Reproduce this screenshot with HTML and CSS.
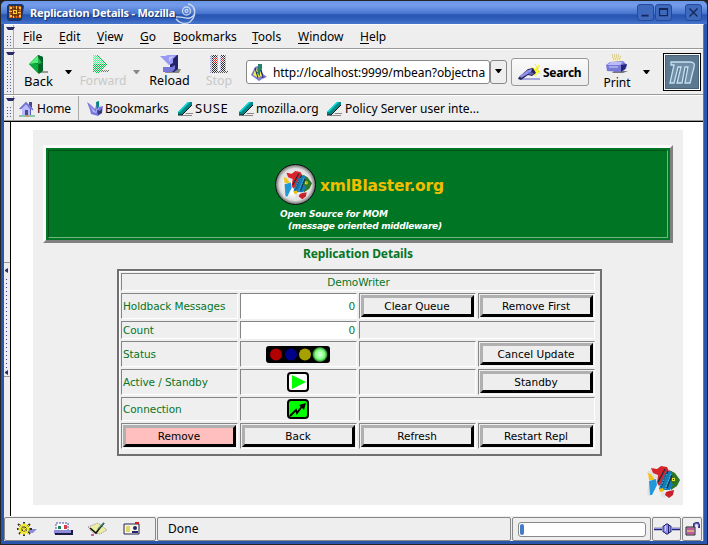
FILE: index.html
```html
<!DOCTYPE html>
<html lang="en">
<head>
<meta charset="utf-8">
<title>Replication Details - Mozilla</title>
<link rel="stylesheet" href="styles.css">
</head>
<body>
<svg class="defs" width="0" height="0">
  <defs>
    <symbol id="tag" viewBox="0 0 17 16">
      <path d="M5 14h10v1H4zM9 12h7v1H8z" fill="#888"/>
      <path d="M1 11 11 1h4v3L5 14H1z" fill="#008888"/>
      <path d="M1 11 11 1h2L3 11z" fill="#00dede"/>
      <path d="M1 14h4L15 4" fill="none" stroke="#111"/>
    </symbol>
    <symbol id="fish" viewBox="0 0 34 34">
      <path d="M5 3 12 7 10 14 3 9 0 7zM3 14 9 16 9 24 3 31 1 28zM15 24l4 2 0 6 4 2-8-4z" fill="#e2e2e2"/>
      <path d="M2 7 5 8 9 14 3 14z" fill="#efc41c"/>
      <path d="M3 15 10 13 11 19 6 29 4 29z" fill="#2297d9"/>
      <path d="M5 2 11 3 15 0 21 1 23 5 18 15 13 20 11 17 12 9 7 7z" fill="#d7252b"/>
      <path d="M23 4 29 7 34 14 31 20 25 24 24 14z" fill="#2e7825"/>
      <path d="M20 6 26 5 26 10 24 14 27 19 24 24 19 24 13 23 15 16z" fill="#147db8"/>
      <path d="m19 3-7 13m10-11-7 16m11-12-5 13" fill="none" stroke="#182c45" stroke-width="1.300"/>
      <path d="m21 8-6 12m10-12-6 15" stroke="#45c4ea" stroke-dasharray="2 1"/>
      <path d="m13 23 4-1 1 3-4 1z" fill="#efbd00"/>
      <path d="m20 26 3-1 5-1-1 5-4 3-4-3z" fill="#c9202b"/>
      <path d="M26 12h3v3h-3z" fill="#f5ea22"/><path d="M27 13h1v1h-1z"/>
    </symbol>
  </defs>
</svg>
<div class="window">
  <header class="titlebar">
    <svg class="appicon" width="17" height="17" viewBox="0 0 17 17"><path d="M0 2 2 0h13l2 2-2 13-2 2H2l-2-2z" fill="#18366b"/><path d="M2 2h12v12H2z" fill="#e0650c"/><path d="M3 5h10M2 8h12M3 11h10M5 2v12M8 1v13M11 2v12" stroke="#25140a" stroke-width=".8"/><path d="M6 6h4v4H6z" fill="#ffd42a"/><path d="M7 7h2v2H7z" fill="#a43c05"/><path d="M3 3h2v2H3zm6-1h1v3H9zm3 1h2v2h-2zM3 11h2v2H3zm3 1h1v2H6zm6-1h2v2h-2zM2 7h3v1H2zm9 1h3v1h-3z" fill="#ffc33a"/></svg>
    <span class="title">Replication Details - Mozilla</span>
    <svg class="curl" width="22" height="22" viewBox="0 0 22 22" fill="none" stroke="#c9d6ef" stroke-width="1.300"><path d="M1 14c8-1 12 4 17-1 4-5 1-11-5-12M1 16c3 4 9 6 14 3 5-4 6-10 3-15"/><circle cx="11.500" cy="8" r="4"/><circle cx="11.500" cy="8" r="1.500"/></svg>
    <div class="winbtns">
      <svg class="wb" viewBox="0 0 17 17"><path d="M4 11h8v2H4z" fill="#14265a"/></svg>
      <svg class="wb" viewBox="0 0 17 17"><path d="M4 4h9v8H4zM4 5h9" fill="none" stroke="#14265a" stroke-width="1.300"/></svg>
      <svg class="wb close" viewBox="0 0 17 17"><path d="m4 4 9 9m0-9-9 9" stroke="#14265a" stroke-width="1.500"/></svg>
    </div>
  </header>

  <div class="chrome">
    <nav class="bar menubar">
      <i class="grip"></i>
      <span class="m-file"><u>F</u>ile</span><span class="m-edit"><u>E</u>dit</span><span class="m-view"><u>V</u>iew</span><span class="m-go"><u>G</u>o</span><span class="m-book"><u>B</u>ookmarks</span><span class="m-tools"><u>T</u>ools</span><span class="m-win"><u>W</u>indow</span><span><u>H</u>elp</span>
    </nav>

    <div class="bar toolbar">
      <i class="grip"></i>
      <div class="tool t-back">
        <svg width="20" height="20" viewBox="0 0 20 20"><path d="M7 17h12v2H9z" fill="#999"/><path d="M0 10 9 1l5 2v14l-4 3z" fill="#087a2a"/><path d="M0 10 9 1v8z" fill="#51ef75"/><path d="M0 10h9v9z" fill="#0aae3e"/><path d="M9 1 14 3v13l-4 3z" fill="#056329"/><path d="m9 3 4 6-4 1z" fill="#1fb44d"/></svg>
        <span>Back</span>
      </div>
      <i class="drop d-back"></i>
      <div class="tool t-fwd">
        <svg width="20" height="20" viewBox="0 0 20 20" shape-rendering="crispEdges"><defs><pattern id="dither" width="2" height="2" patternUnits="userSpaceOnUse"><path d="M0 0h1v1H0zm1 1h1v1H1z" fill="#eee"/></pattern></defs><path d="M9 16h10l-3 2H8z" fill="#777"/><path d="M2 1h4l10 9-9 9-5-1z" fill="#00c444"/><path d="M2 1h4l8 9H2z" fill="#4aff90"/><path d="M0 0h20v20H0z" fill="url(#dither)"/></svg>
        <span>Forward</span>
      </div>
      <i class="drop d-fwd"></i>
      <div class="tool t-reload">
        <svg width="22" height="20" viewBox="0 0 22 20"><path d="M13 15h8l-2 4H5l1-3z" fill="#888"/><path d="M8 1h10v14l-4 3H3v-5h7V8H6z" fill="#23236b"/><path d="M0 2h5l3-1h9l-4 4v4l-4 2z" fill="#9999f4"/><path d="M3 13h9l3-2v4l-3 3H3z" fill="#7777d7"/><path d="m9 3 5-1-3 3-2 3z" fill="#c7c7ff"/></svg>
        <span>Reload</span>
      </div>
      <div class="tool t-stop">
        <svg width="20" height="20" viewBox="0 0 20 20" shape-rendering="crispEdges"><path d="M1 1h8v18H1zM11 1h6v18h-6z" fill="#8c8ce4"/><path d="M3 1h5v18H3zM12 1h4v18h-4z" fill="#26262f"/><path d="M4 3h4v6H4zM12 3h3v5h-3z" fill="#e92020"/><path d="M8 17h11v2H6z" fill="#555"/><path d="M0 0h20v20H0z" fill="url(#dither)"/></svg>
        <span>Stop</span>
      </div>
      <div class="url">
        <svg width="16" height="17" viewBox="0 0 16 17"><path d="m0 11 4-8 3-1 3 2 2 6 4 3-5 2-3 2z" fill="#7979cb"/><path d="m2 11 3-7 4 9-2 1zm7-4 3 6-3-1z" fill="#eaea55"/><path d="M7 0h4v5l-2 3v4L5 8h2z" fill="#258467"/><path d="m4 4 3 10m3-8 2 8" stroke="#20205b"/></svg>
        <span>http://localhost:9999/mbean?objectna</span>
      </div>
      <div class="urldrop"><i class="drop"></i></div>
      <div class="search">
        <svg width="23" height="18" viewBox="0 0 23 18"><path d="M4 14h18v2H3z" fill="#a6a6da"/><path d="m13 2 4 3 4-5-1 6 3 2-4 1-1 4-4-5z" fill="#ffff25"/><path d="m17 0 5 10m0-8-7 8" stroke="#e8cf30" stroke-dasharray="1 1"/><path d="m1 13 9-8 5-1 3 5-4 3-4-1-7 5-3-1z" fill="#25255d"/><path d="m2 12 8-6 4-1-1 3-10 6z" fill="#9292ef"/><path d="m11 8 5 1-2 2-4-1z" fill="#6565b9"/></svg>
        <span>Search</span>
      </div>
      <div class="tool t-print">
        <svg width="23" height="20" viewBox="0 0 23 20"><path d="M8 17h14l-5 2H6z" fill="#777"/><path d="m5 0 9 1 2 8H7z" fill="#f8edbf"/><path d="M6 1h8M6 3h9M7 5h8" stroke="#c1b376" stroke-dasharray="1 1"/><path d="m0 11 4-3 13-1 4 4-1 4-5 3-14-1z" fill="#7878d5"/><path d="m1 11 4-3h12l-3 3z" fill="#babaff"/><path d="m15 11 6-1-2 5-4 3z" fill="#25257b"/><path d="M3 13h9" stroke="#d4d4ff"/></svg>
        <span>Print</span>
      </div>
      <i class="drop d-print"></i>
      <div class="throbber"><svg width="32" height="32" viewBox="0 0 32 32"><path d="M5 6h19c4 0 5 2 4 5l-4 16h-5l3-16h-3l-3 16h-5l4-16h-3L8 27H4L8 9H5z" fill="#718da7" stroke="#c3e1ef" stroke-width="1.300"/></svg></div>
    </div>

    <div class="bar bookmarks">
      <i class="grip"></i>
      <svg class="b-homeicon" width="16" height="16" viewBox="0 0 16 16"><path d="M0 8 7 1l7 7h-2v6H3V8z" fill="#5a5abc"/><path d="m2 8 5-5 4 5v6H3V8z" fill="#b8b8ff"/><path d="M10 1h3v6l-3-3zM6 9h3v5H6z" fill="#494990"/><path d="m1 8 6-6 7 7" fill="none" stroke="#7878d8" stroke-width="1.500"/><path d="M0 15h16" stroke="#2a9d70"/><path d="M6 15h4" stroke="#eb7831"/></svg>
      <span class="b-home">Home</span>
      <svg class="b-bookicon" width="17" height="17" viewBox="0 0 17 17"><path d="m0 2 4 3 4 4 2-7 2 5 4-1-1 7-4 3-7-2-1-4z" fill="#7777df"/><path d="m2 3 3 5 4 4 1-6 2 2-3 5-3-1z" fill="#b8b8ff"/><path d="m9 2 3-1v5l-2 4z" fill="#00857d"/><path d="m10 10 3 1 2-3v5l-4 2z" fill="#38387d"/></svg>
      <span class="b-book">Bookmarks</span>
      <svg class="tagicon"><use href="#tag"/></svg><span class="b-suse">SUSE</span>
      <svg class="tagicon"><use href="#tag"/></svg><span class="b-moz">mozilla.org</span>
      <svg class="tagicon"><use href="#tag"/></svg><span class="b-policy">Policy Server user inte...</span>
    </div>

    <div class="work">
      <aside class="splitter"><div class="handle"><i></i><b></b><i></i></div></aside>
      <main class="page">
        <section class="panel">
          <div class="banner"><div class="banner-in">
            <svg width="172" height="70" viewBox="0 0 172 70">
              <defs><radialGradient id="orb"><stop offset=".45" stop-color="#fff"/><stop offset=".8" stop-color="#ddd"/><stop offset="1" stop-color="#666"/></radialGradient></defs>
              <circle cx="20.500" cy="20.500" r="20" fill="url(#orb)" stroke="#111"/>
              <use href="#fish" x="6" y="7" width="32" height="30"/>
              <text class="brand" x="45" y="27" textLength="124">xmlBlaster.org</text>
              <text class="motto" x="5" y="53" textLength="108">Open Source for MOM</text>
              <text class="motto" x="13" y="65" textLength="154">(message oriented middleware)</text>
            </svg>
          </div></div>
          <h1>Replication Details</h1>
          <div class="grid">
            <div class="cell full">DemoWriter</div>
            <div class="cell">Holdback Messages</div><div class="cell num">0</div><div class="cell act"><button>Clear Queue</button></div><div class="cell act"><button>Remove First</button></div>
            <div class="cell">Count</div><div class="cell num">0</div><div class="cell two"></div>
            <div class="cell">Status</div>
            <div class="cell icon"><svg width="64" height="17" viewBox="0 0 64 17"><defs><radialGradient id="lit"><stop offset=".2" stop-color="#c6ffc6"/><stop offset=".65" stop-color="#79ff79"/><stop offset="1" stop-color="#286b28"/></radialGradient></defs><rect width="64" height="17" rx="3"/><circle cx="10" cy="8.500" r="6" fill="#b00000"/><circle cx="25" cy="8.500" r="6" fill="#000088"/><circle cx="39" cy="8.500" r="6" fill="#a6a000"/><circle cx="54" cy="8.500" r="7.500" fill="url(#lit)"/></svg></div>
            <div class="cell"></div><div class="cell act"><button>Cancel Update</button></div>
            <div class="cell">Active / Standby</div>
            <div class="cell icon"><svg width="22" height="20" viewBox="0 0 22 20"><rect x="1" y="1" width="20" height="18" rx="3" fill="#fff" stroke="#000" stroke-width="2"/><path d="m5 3 14 7-14 7z" fill="#0f0"/></svg></div>
            <div class="cell"></div><div class="cell act"><button>Standby</button></div>
            <div class="cell">Connection</div>
            <div class="cell icon"><svg width="22" height="20" viewBox="0 0 22 20"><rect x="1" y="1" width="20" height="18" rx="3" fill="#0f0" stroke="#000" stroke-width="2"/><path d="m3 17 6-6 1 3 6-8" fill="none" stroke="#000" stroke-width="1.800"/><path d="m12 6 7-2-2 7z"/></svg></div>
            <div class="cell two"></div>
            <div class="cell act"><button class="danger">Remove</button></div><div class="cell act"><button>Back</button></div><div class="cell act"><button>Refresh</button></div><div class="cell act"><button>Restart Repl</button></div>
          </div>
          <svg class="fish"><use href="#fish"/></svg>
        </section>
      </main>
    </div>

    <footer class="status">
      <div class="sbox s-apps">
        <svg width="22" height="14" viewBox="0 0 22 14"><path d="M12 7h9l-4 4h-6z" fill="#8c8cdb"/><path d="m2 2 12 10M8 0v14M1 7h15M14 2 3 12" stroke="#30302a" stroke-width="2"/><circle cx="8" cy="7" r="4" fill="none" stroke="#f3eb28" stroke-width="2"/><path d="m3 3 10 9M8 1v12M2 7h12M13 3 4 12" stroke="#f5ed38"/></svg>
        <svg width="20" height="14" viewBox="0 0 20 14"><path d="M3 1h12v9H3z" fill="#fff" stroke="#4848a4" stroke-dasharray="2 1"/><path d="M1 8h17v4H1z" fill="#8c8cda"/><path d="M2 12h17V8" fill="none" stroke="#1b1b45" stroke-width="2"/><path d="M5 4h3v3H5z" fill="#168453"/><path d="M11 3h3v4h-3z" fill="#d73b4b"/></svg>
        <svg width="20" height="14" viewBox="0 0 20 14"><path d="m0 5 10-4 9 7-7 4-7-1z" fill="#eeeea0" stroke="#8888af" stroke-dasharray="1 1"/><path d="m2 6 6 5 3-4 5-6" fill="none" stroke="#111" stroke-width="1.600"/><path d="m10 7 6-6" stroke="#3b7a68" stroke-width="1.500"/><path d="M3 12h3v2H3z" fill="#d65a98"/></svg>
        <svg width="18" height="14" viewBox="0 0 18 14"><path d="M1 2h15v10H1z" fill="#f8f8dc" stroke="#20205b"/><path d="M3 5h4M3 7h4M3 9h4" stroke="#c9b200"/><path d="M12 0h4v2h-4z" fill="#d61c22"/><circle cx="12" cy="6" r="2" fill="#222276"/><path d="M9 11V9h6v2z" fill="#222276"/></svg>
      </div>
      <div class="sbox s-text">Done</div>
      <div class="sbox s-prog"><div class="track"><i></i></div></div>
      <div class="sbox s-plug"><svg width="26" height="14" viewBox="0 0 26 14"><path d="M0 7h8m10 0h8" stroke="#23236b" stroke-width="2.500"/><path d="M0 6.500h8m10 0h8" stroke="#9292ec"/><path d="M9 4h1l2-2h2l2 2h1v6h-1l-2 2h-2l-2-2H9z" fill="#9090ed" stroke="#25256b"/><path d="M14.500 2v10" stroke="#25256b"/><path d="M11.500 4v5" stroke="#d2d2ff"/></svg></div>
      <div class="sbox s-lock"><svg width="15" height="14" viewBox="0 0 15 14"><path d="M9 6V2l2-1h2l1 2v3" fill="none" stroke="#333384" stroke-width="2"/><path d="M10 5V2h3v3" fill="none" stroke="#b0b0f0" stroke-width=".8"/><path d="M1 5h9v8H1z" fill="#dd9ddd" stroke="#222"/><path d="M2 7h7M2 11h7" stroke="#ac165a"/><path d="M2 9h7" stroke="#c8b828"/></svg></div>
    </footer>
  </div>
</div>
</body>
</html>
```
FILE: styles.css
```css
* { box-sizing: border-box; }
body { margin: 0; width: 708px; height: 545px; overflow: hidden; background: #222; font: 12px/16px "Noto Sans", sans-serif; color: #000; }
.defs { display: block; width: 0; height: 0; }
svg { display: block; flex: none; }
i, b { display: block; flex: none; }

.window { height: 545px; border: 1px solid #252525; border-radius: 6px 6px 0 0; background: #2955ad; overflow: hidden; }
.titlebar { display: flex; height: 23px; padding: 3px 5px 0 6px; background: linear-gradient(#6b97e9, #739bea 20%, #4674cd 55%, #2955b2 60%, #315ebb 80%, #4776cd); }
.appicon { margin-right: 6px; }
.title { width: 149px; white-space: nowrap; font: bold 11px/18px "Noto Sans", sans-serif; letter-spacing: -.2px; color: #fff; text-shadow: 1px 1px 1px #17316d; }
.curl { margin: -1px 0 0 -4px; }
.winbtns { display: flex; margin-left: auto; gap: 1px; }
.wb { width: 17px; height: 17px; border: 1px solid #244a98; border-radius: 3px; background: #3e69bd; }
.close { margin-left: 12px; }

.chrome { display: flex; flex-direction: column; height: 517px; margin: 0 3px; background: #eee; border-top: 1px solid #fafafa; border-right: 1px solid #777; }
.bar { display: flex; border-bottom: 1px solid #999; border-top: 1px solid #fff; }

/* drag handle: a triangle above two columns of single-pixel dots */
.grip { display: flex; flex-direction: column; width: 10px; margin-right: 9px; padding: 2px 0 1px 2px; border-right: 1px solid #aaa; }
.grip::before { content: ""; width: 5px; margin-bottom: 4px; border-top: 3px solid #292967; border-left: 2.5px solid transparent; border-right: 2.5px solid transparent; }
.grip::after { content: ""; flex: 1; width: 5px; background: repeating-linear-gradient(#eee 0 2px, transparent 2px 3px), linear-gradient(90deg, transparent 1px, #55559c 1px 2px, transparent 2px 4px, #55559c 4px); }

.menubar { height: 24px; border-top: 0; line-height: 23px; }
.menubar u { text-underline-offset: 2px; }
.m-file { width: 36px; } .m-edit { width: 38px; } .m-view { width: 43px; } .m-go { width: 33px; } .m-book { width: 79px; } .m-tools { width: 46px; } .m-win { width: 62px; }

.toolbar { height: 46px; }
.tool { display: flex; flex-direction: column; align-items: center; padding-top: 4px; font-size: 13px; line-height: 14px; }
.t-back { width: 31px; }
.t-fwd { width: 48px; color: #c8c8c8; font-size: 12px; }
.t-fwd svg { margin-right: 4px; }
.t-reload { width: 43px; font-size: 12.5px; }
.t-reload span { margin-right: 2px; }
.t-stop { width: 28px; margin-left: 13px; color: #c8c8c8; font-size: 12.5px; }
.drop { width: 7px; height: 4px; border-top: 4px solid #000; border-left: 3.5px solid transparent; border-right: 3.5px solid transparent; }
.d-back { margin: 20px 7px 0 11px; }
.d-fwd { margin: 20px 9px 0 6px; border-top-color: #888; }
.url { display: flex; width: 244px; height: 24px; margin: 10px 0 0 13px; border: 1px solid #888; border-radius: 3px; background: #fff; overflow: hidden; }
.url svg { margin: 3px 6px 0 4px; }
.url span { width: 212px; overflow: hidden; white-space: nowrap; line-height: 23px; letter-spacing: -.08px; }
.urldrop { display: flex; justify-content: center; width: 17px; height: 24px; margin-top: 10px; padding-top: 8px; border: 1px solid #888; border-radius: 3px; }
.search { display: flex; width: 78px; height: 28px; margin: 8px 0 0 4px; padding: 5px 0 0 6px; border: 1px solid #999; border-radius: 3px; background: linear-gradient(#fafafa, #ececec); font-weight: bold; line-height: 17px; }
.search span { margin-left: 2px; letter-spacing: -.3px; }
.t-print { width: 34px; margin-left: 11px; font-size: 12px; }
.t-print span { line-height: 17px; }
.d-print { margin: 20px 13px 0 9px; }
.throbber { display: flex; width: 38px; height: 38px; padding: 1px; margin-top: 3px; border: 1px solid #000; background: #fff; }
.throbber svg { width: 34px; height: 34px; border: 1px solid #47637c; background: #5c7891; }

.bookmarks { height: 26px; line-height: 25px; }
.b-homeicon { margin: 5px 2px 0 -4px; }
.bookmarks span { white-space: nowrap; }
.b-home { width: 42px; border-right: 1px solid #aaa; }
.b-bookicon { margin: 4px 1px 0 8px; }
.b-book { width: 72px; }
.tagicon { width: 17px; height: 16px; margin: 5px 1px 0 0; }
.b-suse { width: 43px; font-size: 13px; letter-spacing: .6px; } .b-moz { width: 70px; } .b-policy { margin-left: 1px; }

.work { display: flex; flex: 1; border-top: 1px solid #000; }
.splitter { width: 7px; border-right: 1px solid #000; background: #eee; }
.handle { height: 115px; margin-top: 140px; padding: 5px 1px 0; border-top: 1px solid #999; border-bottom: 1px solid #999; }
.handle i { width: 3px; height: 5px; border-right: 3px solid #292967; border-top: 2.5px solid transparent; border-bottom: 2.5px solid transparent; }
.handle b { width: 3px; height: 92px; margin: 3px 0 2px; background: repeating-linear-gradient(#eee 0 3px, transparent 3px 4px), linear-gradient(90deg, transparent 1px, #333384 1px 2px, transparent 2px); }
.page { flex: 1; padding: 8px 0 0 22px; background: #fff; }
.panel { width: 650px; height: 375px; padding: 15px 10px; background: #efefef; font-family: "DejaVu Sans", sans-serif; color: #077526; }
.banner { width: 630px; height: 98px; padding: 2px; border: 3px solid; border-color: #fafafa #808080 #808080 #fafafa; background: #007523; }
.banner-in { display: flex; justify-content: center; height: 88px; padding: 13px 0 0 5px; border: 1px solid; border-color: #00501a #72b783 #72b783 #00501a; }
.brand { font: bold 15.5px "DejaVu Sans", sans-serif; fill: #f0bd00; }
.motto { font: italic bold 9px "DejaVu Sans", sans-serif; fill: #fff; }
h1 { margin: 3px 0 8px; text-align: center; font: bold 12px/15px "Noto Sans", sans-serif; letter-spacing: -.1px; }
.grid { display: grid; grid-template-columns: repeat(4, 117px); grid-template-rows: 18px 26px 18px 26px 26px 24px 26px; gap: 2px; width: 485px; height: 187px; margin-left: 74px; padding: 2px 5px 5px 2px; border: 2px solid #707070; box-shadow: inset 1px 1px #fff; }
.cell { display: flex; align-items: center; padding-left: 1px; border: 1px solid; border-color: #858585 #fff #fff #858585; font-size: 10.5px; line-height: 14px; letter-spacing: -.08px; }
.full { grid-column: span 4; justify-content: center; }
.two { grid-column: span 2; }
.num { justify-content: flex-end; padding-right: 1px; background: #fff; }
.icon { justify-content: center; padding: 0 2px 0 0; }
.act { padding: 1px; }
button { width: 113px; height: 22px; padding: 0 1px 0 0; border: 3px solid; border-color: #b0b0b0 #000 #000 #b0b0b0; border-radius: 0; background: #eee; color: #000; font: 10.5px/14px "DejaVu Sans", sans-serif; }
.danger { background: #ffbfbf; }
.fish { width: 34px; height: 34px; margin: 10px 0 0 603px; }

.status { display: flex; height: 25px; padding-top: 1px; }
.sbox { display: flex; align-items: center; height: 24px; border: 1px solid #888; border-radius: 2px; margin-right: 1px; }
.s-apps { width: 152px; gap: 15px; padding-left: 11px; }
.s-text { width: 354px; padding-left: 10px; font-size: 12px; letter-spacing: .1px; }
.s-prog { width: 139px; padding-left: 5px; }
.track { width: 128px; height: 15px; padding: 1px; border: 1px solid #888; border-radius: 3px; background: #fff; }
.track i { width: 4px; height: 11px; border-radius: 2px; background: #467acb; }
.s-plug { width: 29px; justify-content: center; }
.s-lock { width: 20px; justify-content: center; margin: 0; }
```
